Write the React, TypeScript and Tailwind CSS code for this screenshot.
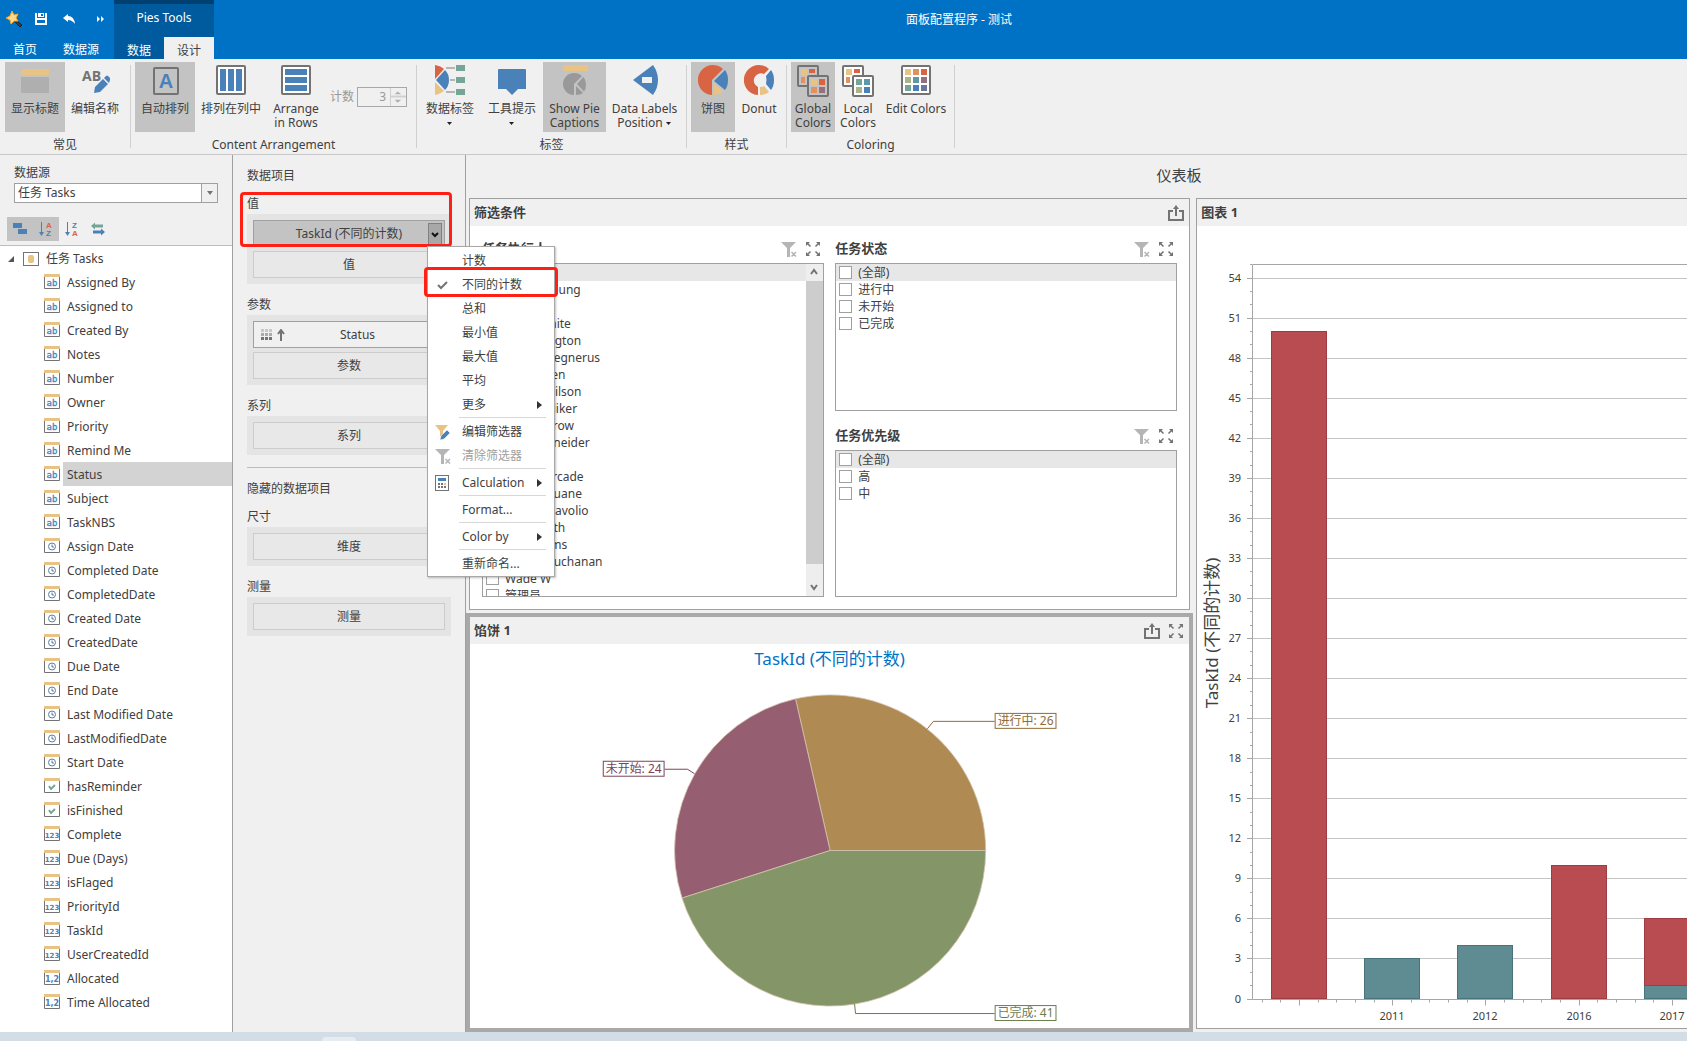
import type { ReactNode } from "react";
import clsx from "clsx";

const BLUE = "#4b81b9";
const GOLD = "#e9c383";
const GRAY = "#737373";
const RED = "#d86444";
const GREEN = "#75a596";

/* ---------- ribbon icons ---------- */

function Ico({ size = 30, children }: { size?: number; children: ReactNode }) {
  return (
    <svg width={size} height={size} viewBox={`0 0 ${size} ${size}`} className="shrink-0" aria-hidden="true">
      {children}
    </svg>
  );
}

const ShowTitleIcon = () => (
  <Ico>
    <rect x="1" y="4" width="28" height="6" fill={GOLD} />
    <rect x="1" y="12" width="28" height="16" fill="#afafaf" />
  </Ico>
);

const EditNamesIcon = () => (
  <Ico>
    <text x="2" y="16" fontSize="14" fontWeight="bold" fontFamily="Open Sans, sans-serif" fill={GRAY}>AB</text>
    <path d="M14 28l1-6 8-8 5 5-8 8z M24 13l2-2q1-1 2 0l2 2q1 1 0 2l-1 3z" fill={BLUE} />
  </Ico>
);

const AutoArrangeIcon = () => (
  <Ico>
    <rect x="4" y="3" width="24" height="26" rx="1" fill="none" stroke={GRAY} strokeWidth="2" />
    <text x="16" y="23" textAnchor="middle" fontSize="20" fontWeight="bold" fontFamily="Liberation Sans, sans-serif" fill={BLUE}>A</text>
  </Ico>
);

const ColumnsIcon = () => (
  <Ico>
    <rect x="1" y="1" width="28" height="28" rx="1" fill="#fff" stroke={GRAY} strokeWidth="2" />
    <path d="M4 4h6v22H4z M12 4h6v22h-6z M20 4h6v22h-6z" fill={BLUE} />
  </Ico>
);

const RowsIcon = () => (
  <Ico>
    <rect x="1" y="1" width="28" height="28" rx="1" fill="#fff" stroke={GRAY} strokeWidth="2" />
    <path d="M4 4h22v6H4z M4 12h22v6H4z M4 20h22v6H4z" fill={BLUE} />
  </Ico>
);

const DataLabelsIcon = () => (
  <Ico>
    <path d="M0 0Q6 1 9 4L0 14z" fill={RED} />
    <path d="M1 15L10 5Q14 9 14 15T10 25z" fill={BLUE} />
    <path d="M0 17l9 9q-4 3-9 4z" fill={GOLD} />
    <path d="M11 2h9v2h-9z M15 14h5v2h-5z M11 26h9v2h-9z" fill="#b5b5b5" />
    <path d="M21 0h9v6h-9z M21 12h9v6h-9z M21 24h9v6h-9z" fill={GREEN} />
  </Ico>
);

const TooltipIcon = () => (
  <Ico>
    <path d="M2 4h26q1 0 1 1v19h-8l-6 6-6-6H1V5q0-1 1-1z" fill={BLUE} />
  </Ico>
);

const PieCaptionsIcon = () => (
  <Ico>
    <rect x="3" y="0" width="25" height="6" fill={GOLD} />
    <path d="M14 19v11A11 11 0 0 1 14 8q5 0 8 3z" fill="#999" />
    <path d="M23.500 12q2.500 3 2.500 7.500t-2 7L17 19z M16 21l7 7q-3 2-7 2z" fill="#999" />
  </Ico>
);

const LabelPositionIcon = () => (
  <Ico>
    <path d="M3 15L23 0q5 7 5 15t-5 15z" fill={BLUE} />
    <rect x="12" y="12" width="10" height="6" fill="#f0f0f0" />
  </Ico>
);

const PieIcon = () => (
  <Ico>
    <path d="M14 15v15A15 15 0 1 1 25 4z" fill={RED} />
    <path d="M16 16L27 5q3 4 3 10t-3 10z" fill={BLUE} />
    <path d="M16 18l9 9q-4 3-9 3z" fill={GOLD} />
  </Ico>
);

const DonutIcon = () => (
  <Ico>
    <path d="M14 22v8A15 15 0 1 1 25 4l-5 5a7 7 0 1 0-6 13z" fill={RED} />
    <path d="M22 11l5-6q3 4 3 10t-3 10l-5-6q1-4 0-8z" fill={BLUE} />
    <path d="M16 22q3 0 4-1l5 6q-4 3-9 3z" fill={GOLD} />
  </Ico>
);

function PaletteIcon({ colors, back }: { colors: string[]; back: string }) {
  return (
    <Ico size={32}>
      <rect x="1" y="1" width="20" height="20" rx="1" fill={back} stroke={GRAY} strokeWidth="2" />
      <path d="M4 4h6v6H4z" fill={GOLD} />
      <path d="M12 4h6v4h-6z" fill={RED} />
      <path d="M4 12h4v6H4z" fill="#e0915f" />
      <rect x="11" y="11" width="20" height="20" rx="1" fill={back} stroke={GRAY} strokeWidth="2" />
      <rect x="14" y="14" width="6" height="6" fill={colors[0]} />
      <rect x="22" y="14" width="6" height="6" fill={colors[1]} />
      <rect x="14" y="22" width="6" height="6" fill={colors[2]} />
      <rect x="22" y="22" width="6" height="6" fill={colors[3]} />
    </Ico>
  );
}

const SWATCHES = [GOLD, "#e0915f", RED, "#adb389", "#5f98a8", "#95707f", GREEN, BLUE, "#6d7799"];

const EditColorsIcon = () => (
  <Ico>
    <rect x="1" y="1" width="28" height="28" rx="1" fill="#fff" stroke={GRAY} strokeWidth="2" />
    {SWATCHES.map((c, i) => (
      <rect key={c} x={4 + (i % 3) * 8} y={4 + Math.floor(i / 3) * 8} width="6" height="6" fill={c} />
    ))}
  </Ico>
);

/* ---------- small icons ---------- */

const FilterClearIcon = () => (
  <svg width="16" height="16" viewBox="0 0 16 16" aria-hidden="true">
    <path d="M0 1h15L9 7v9H6V7z" fill="#b5b5b5" />
    <path d="M10.500 11l4.500 4.500M15 11l-4.500 4.500" stroke="#b5b5b5" strokeWidth="1.500" />
  </svg>
);

const ExpandIcon = () => (
  <svg width="16" height="16" viewBox="0 0 16 16" fill={GRAY} stroke={GRAY} aria-hidden="true">
    <path d="M1 1h4L1 5z M15 1h-4l4 4z M1 15h4l-4-4z M15 15h-4l4-4z" stroke="none" />
    <path d="M2 2l3.500 3.500M14 2l-3.500 3.500M2 14l3.500-3.500M14 14l-3.500-3.500" strokeWidth="1.500" />
  </svg>
);

const ExportIcon = () => (
  <svg width="16" height="16" viewBox="0 0 16 16" fill="none" stroke={GRAY} strokeWidth="2" aria-hidden="true">
    <path d="M5 6H1v9h14V6h-4M8 11V2" />
    <path d="M5 4l3-4 3 4z" fill={GRAY} stroke="none" />
  </svg>
);

type Kind = "text" | "date" | "bool" | "int" | "dec";

function FieldIcon({ kind }: { kind: Kind }) {
  return (
    <svg width="16" height="16" viewBox="0 0 16 16" className="shrink-0" aria-hidden="true">
      <path d="M.5 3v11.500h15V3" fill="#fff" stroke={GRAY} />
      <rect width="16" height="3" fill={GOLD} />
      {kind === "text" && <text x="8" y="12" textAnchor="middle" fontSize="9" fontFamily="DejaVu Sans Mono, monospace" fill={BLUE} stroke={BLUE} strokeWidth=".3">ab</text>}
      {kind === "int" && <text x="8" y="12" textAnchor="middle" fontSize="7" fontWeight="bold" fontFamily="DejaVu Sans, sans-serif" fill={BLUE}>123</text>}
      {kind === "dec" && <text x="8" y="12" textAnchor="middle" fontSize="8" fontWeight="bold" fontFamily="DejaVu Sans, sans-serif" fill={BLUE}>1,2</text>}
      {kind === "date" && (
        <g fill="none" stroke={BLUE}>
          <circle cx="8" cy="8.500" r="3.500" />
          <path d="M8 6.500v2.500h2" stroke={GRAY} />
        </g>
      )}
      {kind === "bool" && <path d="M5 8l2 3 4-4" fill="none" stroke={GREEN} strokeWidth="2" />}
    </svg>
  );
}

/* ---------- header ---------- */

function Header() {
  return (
    <header className="grid h-[59px] shrink-0 grid-cols-[214px_1fr_214px] bg-[#0072c6] text-white">
      <div className="flex">
        <div className="flex w-[114px] flex-col">
          <div className="flex h-[37px] items-center pl-[5px]">
            <svg width="18" height="18" viewBox="0 0 18 18" className="mr-3" aria-hidden="true">
              <path d="M9 9l8 6-2 2-7-7z" fill="#3a3a3a" stroke="#222" />
              <path d="M7 1l2 4 4-1-2 4 2 3-4 0-3 3-1-4-4-2 4-2z" fill="#ffd98a" stroke="#f3a52c" />
            </svg>
            <button aria-label="保存" className="mr-4">
              <svg width="12" height="12" viewBox="0 0 12 12" fill="#fff">
                <path d="M0 0h2v5h8V0h2v12H0z M3 0h6v4H3z" />
                <path d="M6 1h2v2H6z M2 7h8v3H2z" fill="#0072c6" />
              </svg>
            </button>
            <button aria-label="撤销" className="mr-[22px]">
              <svg width="12" height="10" viewBox="0 0 12 10" fill="#fff">
                <path d="M0 4l5-4v2q6 0 7 8-3-4-7-4v2z" />
              </svg>
            </button>
            <button aria-label="更多命令">
              <svg width="7" height="6" viewBox="0 0 7 6" fill="#fff">
                <path d="M0 0l3 3-3 3z M4 0l3 3-3 3z" />
              </svg>
            </button>
          </div>
          <div className="flex h-[22px] items-center text-[12px] leading-5">
            <button className="w-[50px] pt-1">首页</button>
            <button className="w-[62px] pt-1">数据源</button>
          </div>
        </div>
        <div className="flex w-[100px] flex-col border-t-4 border-[#004070] bg-[#005a9e] text-[12px]">
          <div className="flex h-[33px] items-center justify-center pb-1.5">Pies Tools</div>
          <div className="flex h-[22px] leading-5">
            <button className="w-[50px] pt-1">数据</button>
            <button className="w-[50px] bg-[#f0f0f0] pt-1 text-[#404040]">设计</button>
          </div>
        </div>
      </div>
      <h1 className="pt-2.5 text-center text-[12px] leading-5">面板配置程序 - 测试</h1>
    </header>
  );
}

/* ---------- ribbon ---------- */

type RibbonButtonProps = {
  icon: ReactNode;
  width: string;
  active?: boolean;
  children: ReactNode;
};

function RibbonButton({ icon, width, active, children }: RibbonButtonProps) {
  return (
    <button className={clsx("flex h-[70px] shrink-0 flex-col items-center pt-[3px] text-center leading-[14px] whitespace-nowrap", width, active && "bg-[#c3c3c3]")}>
      <span className="mb-[7px] flex h-[30px]">{icon}</span>
      {children}
    </button>
  );
}

function RibbonGroup({ label, pad, children }: { label: string; pad: string; children: ReactNode }) {
  return (
    <section className="flex">
      <div className="flex flex-col">
        <div className={clsx("flex pt-[3px]", pad)}>{children}</div>
        <div className="pt-[3px] text-center leading-5">{label}</div>
      </div>
      <div className="mt-1.5 mb-1.5 w-px bg-[#d0d0d0]" />
    </section>
  );
}

const Caret = () => (
  <svg width="6" height="4" viewBox="0 0 6 4" className="inline-block" aria-hidden="true">
    <path d="M0 0h5L2.500 3z" fill="#222" />
  </svg>
);

function Ribbon() {
  return (
    <div className="flex h-[96px] shrink-0 border-b border-[#c8c8c8] text-[12px]">
      <RibbonGroup label="常见" pad="px-[5px]">
        <RibbonButton icon={<ShowTitleIcon />} width="w-[60px]" active>显示标题</RibbonButton>
        <RibbonButton icon={<EditNamesIcon />} width="w-[60px]">编辑名称</RibbonButton>
      </RibbonGroup>
      <RibbonGroup label="Content Arrangement" pad="pl-1 pr-[9px]">
        <RibbonButton icon={<AutoArrangeIcon />} width="w-[60px]" active>自动排列</RibbonButton>
        <RibbonButton icon={<ColumnsIcon />} width="w-[72px]">排列在列中</RibbonButton>
        <RibbonButton icon={<RowsIcon />} width="w-[58px]"><span>Arrange</span><span>in Rows</span></RibbonButton>
        <div className="flex items-center pl-[5px] text-[#999]">
          <label htmlFor="count" className="mr-[3px]">计数</label>
          <div className="flex h-5 w-[50px] border border-[#a8a8a8]">
            <input id="count" defaultValue="3" disabled className="w-8 min-w-0 pr-1 text-right" />
            <svg width="16" height="18" viewBox="0 0 16 18" className="border-l border-[#d0d0d0]" aria-hidden="true">
              <path d="M0 8.500h16" stroke="#d0d0d0" strokeWidth="2" />
              <path d="M4 6l3-3 4 3z M4 12h7l-4 3z" fill="#b0b0b0" />
            </svg>
          </div>
        </div>
      </RibbonGroup>
      <RibbonGroup label="标签" pad="pl-[2px] pr-[3px]">
        <RibbonButton icon={<DataLabelsIcon />} width="w-[62px]"><span className="mb-1.5">数据标签</span><Caret /></RibbonButton>
        <RibbonButton icon={<TooltipIcon />} width="w-[62px]"><span className="mb-1.5">工具提示</span><Caret /></RibbonButton>
        <RibbonButton icon={<PieCaptionsIcon />} width="w-[63px]" active><span>Show Pie</span><span>Captions</span></RibbonButton>
        <RibbonButton icon={<LabelPositionIcon />} width="w-[77px]"><span>Data Labels</span><span>Position <Caret /></span></RibbonButton>
      </RibbonGroup>
      <RibbonGroup label="样式" pad="pl-1 pr-[3px]">
        <RibbonButton icon={<PieIcon />} width="w-[44px]" active>饼图</RibbonButton>
        <RibbonButton icon={<DonutIcon />} width="w-[48px]">Donut</RibbonButton>
      </RibbonGroup>
      <RibbonGroup label="Coloring" pad="pl-1 pr-[3px]">
        <RibbonButton icon={<PaletteIcon back="#c3c3c3" colors={[GOLD, RED, "#e0915f", "#95707f"]} />} width="w-[44px]" active><span>Global</span><span>Colors</span></RibbonButton>
        <RibbonButton icon={<PaletteIcon back="#fff" colors={[GREEN, "#5f98a8", "#adb389", BLUE]} />} width="w-[46px]"><span>Local</span><span>Colors</span></RibbonButton>
        <RibbonButton icon={<EditColorsIcon />} width="w-[70px]">Edit Colors</RibbonButton>
      </RibbonGroup>
    </div>
  );
}

/* ---------- data source tree ---------- */

const FIELDS: [string, Kind][] = [
  ["Assigned By", "text"],
  ["Assigned to", "text"],
  ["Created By", "text"],
  ["Notes", "text"],
  ["Number", "text"],
  ["Owner", "text"],
  ["Priority", "text"],
  ["Remind Me", "text"],
  ["Status", "text"],
  ["Subject", "text"],
  ["TaskNBS", "text"],
  ["Assign Date", "date"],
  ["Completed Date", "date"],
  ["CompletedDate", "date"],
  ["Created Date", "date"],
  ["CreatedDate", "date"],
  ["Due Date", "date"],
  ["End Date", "date"],
  ["Last Modified Date", "date"],
  ["LastModifiedDate", "date"],
  ["Start Date", "date"],
  ["hasReminder", "bool"],
  ["isFinished", "bool"],
  ["Complete", "int"],
  ["Due (Days)", "int"],
  ["isFlaged", "int"],
  ["PriorityId", "int"],
  ["TaskId", "int"],
  ["UserCreatedId", "int"],
  ["Allocated", "dec"],
  ["Time Allocated", "dec"],
];

function SortIcon({ top, bottom, topColor, bottomColor }: { top: string; bottom: string; topColor: string; bottomColor: string }) {
  return (
    <svg width="14" height="16" viewBox="0 0 14 16" fontFamily="Liberation Sans, sans-serif" fontSize="8" fontWeight="bold" aria-hidden="true">
      <path d="M2.500 1v12" stroke={BLUE} />
      <path d="M0 11h5l-2.500 4z" fill={BLUE} />
      <text x="7" y="7" fill={topColor}>{top}</text>
      <text x="7" y="15" fill={bottomColor}>{bottom}</text>
    </svg>
  );
}

function SourcePanel() {
  return (
    <aside className="flex w-[233px] shrink-0 flex-col border-r border-[#a0a0a0] text-[12px]">
      <div className="border-b border-[#bdbdbd] pt-2 pb-1">
        <label htmlFor="source" className="block pl-3.5 leading-5">数据源</label>
        <div className="relative mr-3.5 ml-3.5 h-5 border border-[#a0a0a0] bg-white">
          <select id="source" className="h-full w-full appearance-none pl-[3px] leading-[18px]">
            <option>任务 Tasks</option>
          </select>
          <span className="pointer-events-none absolute inset-y-0 right-0 flex w-4 items-center justify-center border-l border-[#a0a0a0] bg-[#f0f0f0]">
            <svg width="6" height="4" viewBox="0 0 6 4"><path d="M0 0h6L3 4z" fill={GRAY} /></svg>
          </span>
        </div>
        <div className="mt-3.5 flex h-6 pl-[7px]">
          <button aria-label="分组" className="flex w-[26px] items-center justify-center bg-[#c3c3c3]">
            <svg width="14" height="12" viewBox="0 0 14 12"><path d="M0 0h9v5H0z M5 6h9v5H5z" fill={BLUE} /></svg>
          </button>
          <button aria-label="升序" className="flex w-[26px] items-center justify-center bg-[#c3c3c3]">
            <SortIcon top="A" bottom="Z" topColor={RED} bottomColor={BLUE} />
          </button>
          <button aria-label="降序" className="flex w-[26px] items-center justify-center">
            <SortIcon top="Z" bottom="A" topColor={BLUE} bottomColor={RED} />
          </button>
          <button aria-label="刷新" className="flex w-[26px] items-center justify-center">
            <svg width="14" height="14" viewBox="0 0 14 14">
              <path d="M0 4l4-3.500v2h8v3H4v2z" fill={GREEN} />
              <path d="M14 10l-4 3.500v-2H2v-3h8v-2z" fill={BLUE} />
            </svg>
          </button>
        </div>
      </div>
      <div className="min-h-0 flex-1 overflow-hidden bg-white">
        <div className="flex h-6 items-center pt-px pl-2">
          <svg width="6" height="6" viewBox="0 0 6 6" className="mr-[9px]"><path d="M6 0v6H0z" fill="#555" /></svg>
          <svg width="16" height="14" viewBox="0 0 16 14" className="mr-[7px]">
            <rect x=".5" y=".5" width="15" height="13" fill="#fff" stroke={GRAY} />
            <rect x="5" y="3" width="6" height="8" rx="2" fill={GOLD} />
          </svg>
          任务 Tasks
        </div>
        <ul>
          {FIELDS.map(([name, kind]) => (
            <li key={name} className="flex h-6 items-center pl-11">
              <FieldIcon kind={kind} />
              <button className={clsx("ml-[3px] h-full flex-1 pt-0.5 pl-1 text-left", name === "Status" && "bg-[#d3d3d3]")}>{name}</button>
            </li>
          ))}
        </ul>
      </div>
    </aside>
  );
}

/* ---------- data items ---------- */

const MENU_TOP = ["计数", "不同的计数", "总和", "最小值", "最大值", "平均", "更多"];

function MenuItem({ icon, arrow, disabled, marked, children }: { icon?: ReactNode; arrow?: boolean; disabled?: boolean; marked?: boolean; children: ReactNode }) {
  return (
    <button disabled={disabled} className={clsx("relative flex h-6 w-full items-center text-left", disabled && "text-[#a0a0a0]")}>
      <span className="flex w-[34px] items-center pl-[7px]">{icon}</span>
      <span className="flex-1">{children}</span>
      {arrow && <svg width="5" height="8" viewBox="0 0 5 8" className="mr-3"><path d="M0 0l5 4-5 4z" fill="#333" /></svg>}
      {marked && <span className="absolute -inset-x-[4px] -top-[6px] h-[30px] rounded-sm border-[3px] border-[#fe2015]" />}
    </button>
  );
}

const MenuLine = () => <div className="mr-2 ml-[31px] h-[3px] border-t border-[#d8d8d8]" />;

function AggregateMenu() {
  return (
    <div role="menu" className="absolute top-[26px] left-[174px] z-20 w-[128px] border border-[#a8a8a8] bg-white pt-[2px] text-[12px] shadow-[1px_1px_2px_rgba(0,0,0,0.25)]">
      {MENU_TOP.map((name) => (
        <MenuItem
          key={name}
          marked={name === "不同的计数"}
          arrow={name === "更多"}
          icon={name === "不同的计数" && (
            <svg width="14" height="10" viewBox="0 0 14 10" fill="none" stroke={GRAY} strokeWidth="2"><path d="M3 5l3 3 6-6" /></svg>
          )}
        >
          {name}
        </MenuItem>
      ))}
      <MenuLine />
      <MenuItem
        icon={
          <svg width="15" height="15" viewBox="0 0 15 15">
            <path d="M0 0h13L8 6v5H5V6z" fill={GOLD} />
            <path d="M5 15l1-4 6-6 3 3-6 6z" fill={BLUE} stroke="#fff" strokeWidth=".5" />
          </svg>
        }
      >
        编辑筛选器
      </MenuItem>
      <MenuItem icon={<FilterClearIcon />} disabled>清除筛选器</MenuItem>
      <MenuLine />
      <MenuItem
        arrow
        icon={
          <svg width="14" height="16" viewBox="0 0 14 16">
            <rect x=".5" y=".5" width="13" height="15" fill="#fff" stroke={GRAY} />
            <path d="M3 3h8v3H3z" fill={BLUE} />
            <path d="M3 8h2v2H3z M6 8h2v2H6z M3 11h2v2H3z M6 11h2v2H6z M9 11h2v2H9z" fill={GRAY} />
            <path d="M9 8h2v2H9z" fill={GOLD} />
          </svg>
        }
      >
        Calculation
      </MenuItem>
      <MenuLine />
      <MenuItem>Format...</MenuItem>
      <MenuLine />
      <MenuItem arrow>Color by</MenuItem>
      <MenuLine />
      <MenuItem>重新命名...</MenuItem>
    </div>
  );
}

function Slot({ children }: { children: ReactNode }) {
  return <button className="h-[27px] border border-[#cccccc] bg-[#e8e8e8] pt-px">{children}</button>;
}

function SlotGroup({ label, gap, children }: { label: string; gap: string; children: ReactNode }) {
  return (
    <div className={gap}>
      <div className="h-5 leading-5">{label}</div>
      <div className="flex flex-col gap-1 bg-[#e4e4e4] p-1.5">{children}</div>
    </div>
  );
}

function ItemsPanel() {
  return (
    <aside className="w-[233px] shrink-0 border-r border-[#a0a0a0] px-3.5 pt-[11px] text-[12px]">
      <h2 className="h-5 leading-5">数据项目</h2>
      <div className="relative">
        <SlotGroup label="值" gap="mt-2">
          <div className="relative flex h-[27px] flex-col">
            <button className="h-full border border-[#a0a0a0] bg-[#c3c3c3]">TaskId (不同的计数)</button>
            <button aria-label="TaskId 选项" className="absolute top-[3px] right-[3px] flex h-6 w-3.5 items-center justify-center border border-[#808080] bg-[#a8a8a8]">
              <svg width="8" height="6" viewBox="0 0 8 6" fill="none" stroke="#111" strokeWidth="2"><path d="M1 1l3 3 3-3" /></svg>
            </button>
            <AggregateMenu />
          </div>
          <Slot>值</Slot>
        </SlotGroup>
        <span className="pointer-events-none absolute -top-[2px] -right-px -left-[7px] z-10 h-[55px] rounded-sm border-[3px] border-[#fe2015]" />
      </div>
      <SlotGroup label="参数" gap="mt-[11px]">
        <button className="flex h-[27px] items-center border border-[#a0a0a0] bg-[#f0f0f0] pl-[7px]">
          <svg width="26" height="12" viewBox="0 0 26 12">
            <path d="M0 0h3v3H0z M4 0h3v3H4z M8 0h3v3H8z" fill="#c8c8c8" />
            <path d="M0 4h3v3H0z M4 4h3v3H4z M8 4h3v3H8z" fill="#aaa" />
            <path d="M0 8h3v3H0z M4 8h3v3H4z M8 8h3v3H8z" fill={GRAY} />
            <path d="M20 12V2M17 5l3-4 3 4" fill="none" stroke={GRAY} strokeWidth="2" />
          </svg>
          <span className="flex-1 pr-4 text-center">Status</span>
        </button>
        <Slot>参数</Slot>
      </SlotGroup>
      <SlotGroup label="系列" gap="mt-[11px]">
        <Slot>系列</Slot>
      </SlotGroup>
      <hr className="mt-3 border-[#bdbdbd]" />
      <h2 className="mt-[11px] h-5 leading-5">隐藏的数据项目</h2>
      <SlotGroup label="尺寸" gap="mt-2">
        <Slot>维度</Slot>
      </SlotGroup>
      <SlotGroup label="测量" gap="mt-[11px]">
        <Slot>测量</Slot>
      </SlotGroup>
    </aside>
  );
}

/* ---------- dashboard ---------- */

const ASSIGNEES = [
  "(全部)",
  "Andy Cheung",
  "Bo Li",
  "Brian White",
  "Jo Harrington",
  "Harold Regnerus",
  "Dan Green",
  "Trevor Wilson",
  "Peter Beliker",
  "Jane Darrow",
  "John Schneider",
  "Ken Ito",
  "Kevin Forcade",
  "Arthur Duane",
  "Robert Davolio",
  "Paul Smith",
  "Ray Adams",
  "Steven Buchanan",
  "Wade W",
  "管理员",
];

function FilterList({ title, options, scroll }: { title: string; options: string[]; scroll?: boolean }) {
  return (
    <div className="flex min-h-0 flex-1 flex-col">
      <div className="mb-1 flex h-5 items-center">
        <h3 className="flex-1 text-[13px] font-bold">{title}</h3>
        <button aria-label="清除筛选" className="mr-2"><FilterClearIcon /></button>
        <button aria-label="最大化" className="mr-[3px]"><ExpandIcon /></button>
      </div>
      <div className="flex min-h-0 flex-1 border border-[#a0a0a0] text-[12px]">
        <ul className="min-w-0 flex-1 overflow-hidden">
          {options.map((o, i) => (
            <li key={o} className={clsx("h-[17px]", i === 0 && "bg-[#e7e7e7]")}>
              <label className="flex h-full items-center pl-[3px] leading-[17px]">
                <input type="checkbox" className="mr-1.5 size-[13px] appearance-none border border-[#a0a0a0] bg-white" />
                {o}
              </label>
            </li>
          ))}
        </ul>
        {scroll && (
          <div className="flex w-[17px] flex-col bg-[#eeeeee]">
            <svg width="17" height="17" viewBox="0 0 17 17" fill="none" stroke={GRAY} strokeWidth="2"><path d="M5 10l3-4 3 4" /></svg>
            <div className="flex-1 bg-[#cdcdcd]" />
            <div className="h-[15px]" />
            <svg width="17" height="17" viewBox="0 0 17 17" fill="none" stroke={GRAY} strokeWidth="2"><path d="M5 6l3 4 3-4" /></svg>
          </div>
        )}
      </div>
    </div>
  );
}

function CardHeader({ title, children }: { title: string; children?: ReactNode }) {
  return (
    <div className="flex h-[27px] shrink-0 items-center gap-2 bg-[#f0f0f0] pr-[5px] pl-1">
      <h2 className="flex-1 text-[13px] font-bold">{title}</h2>
      {children}
    </div>
  );
}

const PIE = [
  { name: "进行中", value: 26, fill: "#af8a53", ink: "#8f6b35", box: [525, 37], line: "M525 45.500H463.500L457.500 53" },
  { name: "未开始", value: 24, fill: "#955f71", ink: "#7a4458", box: [132, 85], line: "M194 93.500H217L224 98" },
  { name: "已完成", value: 41, fill: "#849667", ink: "#6b7d4d", box: [525, 330], line: "M525 338.500H385.500L384.500 329" },
];

function PieChart() {
  const cx = 360;
  const cy = 175;
  const r = 156;
  const total = PIE.reduce((sum, s) => sum + s.value, 0);
  let start = 0;
  return (
    <svg viewBox="0 0 719 353" className="min-h-0 w-full flex-1" role="img" aria-label="TaskId">
      {PIE.map((s) => {
        const sweep = (s.value / total) * Math.PI * 2;
        const end = start + sweep;
        const p = (a: number) => `${cx + r * Math.cos(a)} ${cy - r * Math.sin(a)}`;
        const d = `M${cx} ${cy}L${p(start)}A${r} ${r} 0 ${sweep > Math.PI ? 1 : 0} 0 ${p(end)}Z`;
        start = end;
        return (
          <g key={s.name}>
            <path d={d} fill={s.fill} stroke="#d3c3ad" strokeWidth=".8" />
            <path d={s.line} fill="none" stroke={s.ink} />
            <rect x={s.box[0] + 0.5} y={s.box[1] + 0.5} width="61" height="15" fill="#fff" stroke={s.ink} />
            <text x={s.box[0] + 31} y={s.box[1] + 12} textAnchor="middle" fontSize="12" fill={s.ink}>{s.name}: {s.value}</text>
          </g>
        );
      })}
    </svg>
  );
}

const COLUMNS = [
  { label: "", parts: [{ from: 0, to: 50, red: true }] },
  { label: "2011", parts: [{ from: 0, to: 3, red: false }] },
  { label: "2012", parts: [{ from: 0, to: 4, red: false }] },
  { label: "2016", parts: [{ from: 0, to: 10, red: true }] },
  { label: "2017", parts: [{ from: 0, to: 1, red: false }, { from: 1, to: 6, red: true }] },
];

function BarChart() {
  const x0 = 55.5;
  const base = 773;
  const y = (v: number) => Math.floor(base - v * 13.35) + 0.5;
  const x = (i: number) => Math.round(102 + i * 93.2);
  const units = Array.from({ length: 56 }, (_, i) => i);
  return (
    <svg viewBox="0 0 691 802" preserveAspectRatio="xMinYMin meet" className="min-h-0 w-full flex-1" role="img" aria-label="图表 1">
      <g stroke="#c4c4c4">
        {units.filter((v) => v % 3 === 0).map((v) => <path key={v} d={`M${x0} ${y(v)}H691`} />)}
      </g>
      <g stroke="#a6a6a6">
        <path d={`M${x0} ${y(55)}V${y(0)}H691M${x0} ${y(55)}H691`} fill="none" />
        {units.map((v) => <path key={v} d={`M${v % 3 === 0 ? 50 : 53} ${y(v)}H55`} />)}
        {Array.from({ length: 27 }, (_, i) => i - 2).map((i) => (
          <path key={i} d={`M${Math.round(102 + i * 18.64) + 0.5} ${y(0)}v${i % 5 === 0 ? 6 : 3}`} />
        ))}
      </g>
      {COLUMNS.map((c, i) =>
        c.parts.map((p) => (
          <rect key={`${c.label}-${p.from}`} x={x(i) - 27.5} y={y(p.to)} width="55" height={y(p.from) - y(p.to) - (p.from ? 0 : 1)} fill={p.red ? "#b84c50" : "#5f8b93"} stroke={p.red ? "#9d3c42" : "#47747c"} />
        ))
      )}
      <g fontSize="11" fill="#404040">
        {units.filter((v) => v % 3 === 0).map((v) => (
          <text key={v} x="44" y={y(v) + 3.5} textAnchor="end">{v}</text>
        ))}
        {COLUMNS.map((c, i) => <text key={c.label} x={x(i)} y="794" textAnchor="middle">{c.label}</text>)}
      </g>
      <text transform="translate(21 407) rotate(-90)" textAnchor="middle" fontSize="17" fill="#404040">TaskId (不同的计数)</text>
    </svg>
  );
}

function Dashboard() {
  return (
    <main className="flex min-w-0 flex-1 flex-col pr-[26px]">
      <h1 className="h-[43px] shrink-0 pt-2 text-center text-[15px] leading-6">仪表板</h1>
      <div className="flex min-h-0 flex-1">
        <div className="grid w-[51%] shrink-0 grid-rows-[minmax(0,415fr)_minmax(0,419fr)]">
          <div className="flex flex-col px-[3px] pb-[3px]">
            <section className="flex min-h-0 flex-1 flex-col border border-[#a0a0a0] bg-white">
              <CardHeader title="筛选条件">
                <button aria-label="导出"><ExportIcon /></button>
              </CardHeader>
              <div className="flex min-h-0 flex-1 gap-[11px] px-3 pt-[13px] pb-3">
                <FilterList title="任务执行人" options={ASSIGNEES} scroll />
                <div className="flex min-h-0 flex-1 flex-col gap-[15px]">
                  <FilterList title="任务状态" options={["(全部)", "进行中", "未开始", "已完成"]} />
                  <FilterList title="任务优先级" options={["(全部)", "高", "中"]} />
                </div>
              </div>
            </section>
          </div>
          <section className="flex flex-col border-4 border-[#a9a9a9] bg-white">
            <CardHeader title="馅饼 1">
              <button aria-label="导出"><ExportIcon /></button>
              <button aria-label="最大化"><ExpandIcon /></button>
            </CardHeader>
            <h3 className="h-8 shrink-0 text-center text-[17px] leading-[30px] text-[#0072c6]">TaskId (不同的计数)</h3>
            <PieChart />
          </section>
        </div>
        <section className="mb-[3px] ml-[3px] flex flex-1 flex-col border border-[#a0a0a0] bg-white">
          <CardHeader title="图表 1" />
          <BarChart />
        </section>
      </div>
    </main>
  );
}

export default function App() {
  return (
    <div className="h-screen w-full overflow-hidden">
      <div className="flex h-full min-w-[1918px] flex-col bg-[#f0f0f0] font-['Noto_Sans','Noto_Sans_CJK_SC',sans-serif] text-[#404040]">
        <Header />
        <Ribbon />
        <div className="flex min-h-0 flex-1">
          <SourcePanel />
          <ItemsPanel />
          <Dashboard />
        </div>
        <footer className="flex h-[9px] shrink-0 items-end bg-[#d3dde6] pl-[322px]">
          <div className="h-1 w-[34px] rounded-t-sm bg-[#e6ecf2]" />
        </footer>
      </div>
    </div>
  );
}
